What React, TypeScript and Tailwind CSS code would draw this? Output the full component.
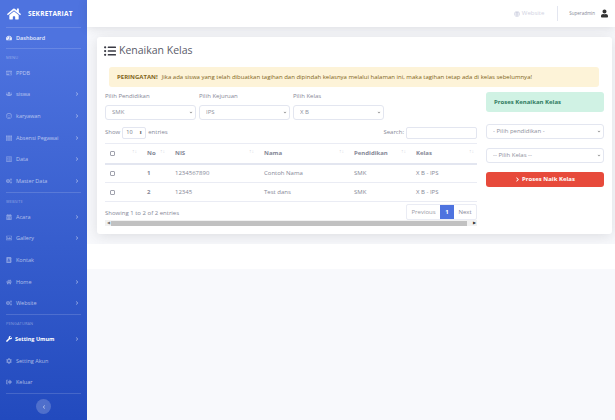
import React from 'react';
import {
  FaHome, FaTachometerAlt, FaRegIdCard, FaUsers, FaRegSmile, FaTh, FaRegListAlt, FaCogs,
  FaCalendarAlt, FaRegImage, FaAddressBook, FaWrench, FaCog, FaSignOutAlt, FaChevronRight,
  FaChevronLeft, FaChevronDown, FaListUl, FaGlobe, FaUser,
} from 'react-icons/fa';

type NavItem = { label: string; icon: React.ElementType; arrow?: boolean; active?: boolean };

const menu: NavItem[] = [
  { label: 'PPDB', icon: FaRegIdCard },
  { label: 'siswa', icon: FaUsers, arrow: true },
  { label: 'karyawan', icon: FaRegSmile, arrow: true },
  { label: 'Absensi Pegawai', icon: FaTh, arrow: true },
  { label: 'Data', icon: FaRegListAlt, arrow: true },
  { label: 'Master Data', icon: FaCogs, arrow: true },
];
const website: NavItem[] = [
  { label: 'Acara', icon: FaCalendarAlt, arrow: true },
  { label: 'Gallery', icon: FaRegImage, arrow: true },
  { label: 'Kontak', icon: FaAddressBook },
  { label: 'Home', icon: FaHome, arrow: true },
  { label: 'Website', icon: FaCogs, arrow: true },
];
const pengaturan: NavItem[] = [
  { label: 'Setting Umum', icon: FaWrench, arrow: true, active: true },
  { label: 'Setting Akun', icon: FaCog },
  { label: 'Keluar', icon: FaSignOutAlt },
];

const rows = [
  { no: 1, nis: '1234567890', nama: 'Contoh Nama' },
  { no: 2, nis: '12345', nama: 'Test dans' },
];

const NavRow = ({ item }: { item: NavItem }) => {
  const Icon = item.icon;
  return (
    <div className={`flex h-[21.67px] shrink-0 items-center px-[6px] text-[5.5px] ${item.active ? 'font-bold text-white' : 'text-white/60'}`}>
      <Icon className={`h-[6px] w-[6px] shrink-0 ${item.active ? 'text-white' : 'text-white/40'}`} />
      <span className={item.active ? 'ml-[3px]' : 'ml-[4px]'}>{item.label}</span>
      {item.arrow && <FaChevronRight className="ml-auto mr-[2px] h-[4px] w-[4px] text-white/50" />}
    </div>
  );
};

const Heading = ({ children }: { children: React.ReactNode }) => (
  <div className="flex h-[13px] shrink-0 items-center px-[6px] pt-[5px] text-[4px] tracking-[0.1px] text-white/40">{children}</div>
);

const Divider = () => <div className="mx-[6px] shrink-0 border-t border-white/15" />;

const SortArrows = () => (
  <span className="absolute right-[3px] top-[5px] text-[5px] leading-none text-[#d5d7e0]">↑↓</span>
);

const Select = ({ value, className }: { value: string; className?: string }) => (
  <div className={`relative ${className ?? ''}`}>
    <select
      className="block h-[15px] w-full appearance-none rounded-[3px] border border-[#e3e6f0] bg-white pl-[6px] text-[6px] text-[#8d8f9c] outline-none"
      defaultValue={value}
    >
      <option>{value}</option>
    </select>
    <FaChevronDown className="pointer-events-none absolute right-[3px] top-[6px] h-[3px] w-[4px] text-[#555]" />
  </div>
);

export default function App() {
  return (
    <div className="flex h-[420px] w-[615px] overflow-hidden bg-[#f8f9fc] font-['Open_Sans',sans-serif] text-[#858796]">
      {/* Sidebar */}
      <aside className="flex w-[87px] shrink-0 flex-col bg-linear-to-b from-[#4e73df] from-10% to-[#224abe]">
        <div className="flex h-[27px] shrink-0 items-center pl-[7px] text-white">
          <FaHome className="h-[14px] w-[14px]" />
          <span className="ml-[7px] text-[6.5px] font-bold tracking-[0.2px]">SEKRETARIAT</span>
        </div>
        <Divider />
        <div className="flex h-[20px] shrink-0 items-center px-[6px] text-[5.5px] font-semibold text-white/85">
          <FaTachometerAlt className="h-[6px] w-[6px] text-white/90" />
          <span className="ml-[4px]">Dashboard</span>
        </div>
        <Divider />
        <Heading>MENU</Heading>
        {menu.map(item => <NavRow key={item.label} item={item} />)}
        <Divider />
        <Heading>WEBSITE</Heading>
        {website.map(item => <NavRow key={item.label} item={item} />)}
        <Divider />
        <Heading>PENGATURAN</Heading>
        {pengaturan.map(item => <NavRow key={item.label} item={item} />)}
        <Divider />
        <div className="mt-[5px] flex shrink-0 justify-center">
          <div className="flex h-[15px] w-[15px] items-center justify-center rounded-full bg-white/20">
            <FaChevronLeft className="h-[4px] w-[4px] text-white/60" />
          </div>
        </div>
      </aside>

      {/* Main */}
      <div className="flex min-w-0 flex-1 flex-col">
        <header className="relative z-10 flex h-[27px] shrink-0 items-center justify-end bg-white pr-[7px] shadow-[0_1px_10px_rgba(58,59,69,0.15)]">
          <FaGlobe className="h-[6px] w-[6px] text-[#d1d3e2]" />
          <span className="ml-[2px] text-[6px] text-[#d1d3e2]">Website</span>
          <div className="ml-[13px] h-[15px] border-l border-[#e3e6f0]" />
          <span className="ml-[11px] text-[4.5px] text-[#858796]">Superadmin</span>
          <FaUser className="ml-[6px] h-[11px] w-[7px] text-[#333]" />
        </header>

        <main className="h-[217px] shrink-0 pl-[10px] pr-[3px] pt-[10px]">
          <section className="h-[197px] rounded-[3px] bg-white px-[8px] pt-[6px] shadow-[0_2px_14px_rgba(58,59,69,0.15)]">
            <h1 className="flex h-[14px] items-center pt-[1px] text-[10.5px] leading-none text-[#5a5c69]">
              <FaListUl className="mr-[2px] h-[12px] w-[12px] -translate-x-[1px] text-[#3a3b45]" />
              Kenaikan Kelas
            </h1>
            <div className="ml-[4px] mr-[5px] mt-[10px] flex h-[20px] items-center rounded-[3px] bg-[#fdf3d8] pl-[8px] text-[6px] text-[#806520]">
              <b className="mr-[4px]">PERINGATAN!</b>
              <span>Jika ada siswa yang telah dibuatkan tagihan dan dipindah kelasnya melalui halaman ini, maka tagihan tetap ada di kelas sebelumnya!</span>
            </div>

            <div className="mt-[5px] flex gap-[9px]">
              {/* Left column */}
              <div className="w-[372px] shrink-0">
                <div className="flex gap-[3px]">
                  {[
                    { label: 'Pilih Pendidikan', value: 'SMK' },
                    { label: 'Pilih Kejuruan', value: 'IPS' },
                    { label: 'Pilih Kelas', value: 'X B' },
                  ].map(f => (
                    <label key={f.label} className="flex w-[91px] flex-col text-[6px]">
                      <span className="flex h-[8px] items-center">{f.label}</span>
                      <Select value={f.value} className="mt-[5px]" />
                    </label>
                  ))}
                </div>

                <div className="mt-[6px] flex h-[13px] items-center text-[6px]">
                  <span>Show</span>
                  <span className="mx-[2px] flex h-[12px] w-[24px] items-center justify-between rounded-[2px] border border-[#e3e6f0] px-[3px] text-[5.5px] text-[#6e707e]">
                    10<span className="text-[4px] leading-none text-[#555]">⬍</span>
                  </span>
                  <span>entries</span>
                  <span className="ml-auto mr-[2px]">Search:</span>
                  <span className="h-[12px] w-[71px] rounded-[2px] border border-[#e3e6f0]" />
                </div>

                <table className="mt-[4px] w-[372px] table-fixed border-collapse text-[6px]">
                  <colgroup>
                    <col className="w-[35px]" />
                    <col className="w-[28px]" />
                    <col className="w-[89px]" />
                    <col className="w-[90px]" />
                    <col className="w-[62px]" />
                    <col className="w-[68px]" />
                  </colgroup>
                  <thead>
                    <tr className="h-[20px] border-y border-t-[#eaecf4] border-b-2 border-b-[#e3e6f0] text-left font-bold">
                      <th className="relative pl-[5px]">
                        <span className="block h-[5px] w-[5px] rounded-[1px] border border-[#a0a2ad]" />
                        <SortArrows />
                      </th>
                      {['No', 'NIS', 'Nama', 'Pendidikan', 'Kelas'].map(h => (
                        <th key={h} className="relative pl-[7px] font-bold text-[#858796]">
                          {h}
                          <SortArrows />
                        </th>
                      ))}
                    </tr>
                  </thead>
                  <tbody>
                    {rows.map(r => (
                      <tr key={r.no} className="h-[19px] border-b border-[#eaecf4]">
                        <td className="pl-[5px]">
                          <span className="block h-[5px] w-[5px] rounded-[1px] border border-[#a0a2ad]" />
                        </td>
                        <td className="pl-[7px] font-bold">{r.no}</td>
                        <td className="pl-[7px]">{r.nis}</td>
                        <td className="pl-[7px]">{r.nama}</td>
                        <td className="pl-[7px]">SMK</td>
                        <td className="pl-[7px]">X B - IPS</td>
                      </tr>
                    ))}
                  </tbody>
                </table>

                <div className="mt-[2px] flex h-[16px] items-center text-[6px]">
                  <span className="pt-[3px]">Showing 1 to 2 of 2 entries</span>
                  <div className="ml-auto flex h-[16px] items-stretch rounded-[2px] border border-[#eaecf4]">
                    <span className="flex w-[33px] items-center justify-center text-[#9a9ba6]">Previous</span>
                    <span className="flex w-[14px] items-center justify-center bg-[#4e73df] font-bold text-white">1</span>
                    <span className="flex w-[22px] items-center justify-center text-[#858796]">Next</span>
                  </div>
                </div>

                <div className="flex h-[6px] items-center bg-[#f1f1f1]">
                  <span className="w-[6px] text-center text-[3.5px] leading-none text-[#777]">◀</span>
                  <div className="h-[5px] w-[356px] bg-[#c1c1c1]" />
                  <span className="ml-auto w-[6px] text-center text-[3.5px] leading-none text-[#333]">▶</span>
                </div>
              </div>

              {/* Right column */}
              <div className="flex w-[118px] flex-col">
                <div className="flex h-[20px] items-center rounded-[3px] bg-[#d0f2e4] pl-[8px] text-[6px] font-bold text-[#2f7a60]">
                  Proses Kenaikan Kelas
                </div>
                <Select value="- Pilih pendidikan -" className="mt-[12px]" />
                <Select value="-- Pilih Kelas --" className="mt-[9px]" />
                <div className="mt-[9px] flex h-[15px] items-center justify-center gap-[2px] rounded-[3px] bg-[#e74a3b] text-[6px] font-bold text-white">
                  <FaChevronRight className="h-[5px] w-[5px]" />
                  Proses Naik Kelas
                </div>
              </div>
            </div>
          </section>
        </main>

        <div className="h-[25px] shrink-0 bg-white" />
      </div>
    </div>
  );
}
